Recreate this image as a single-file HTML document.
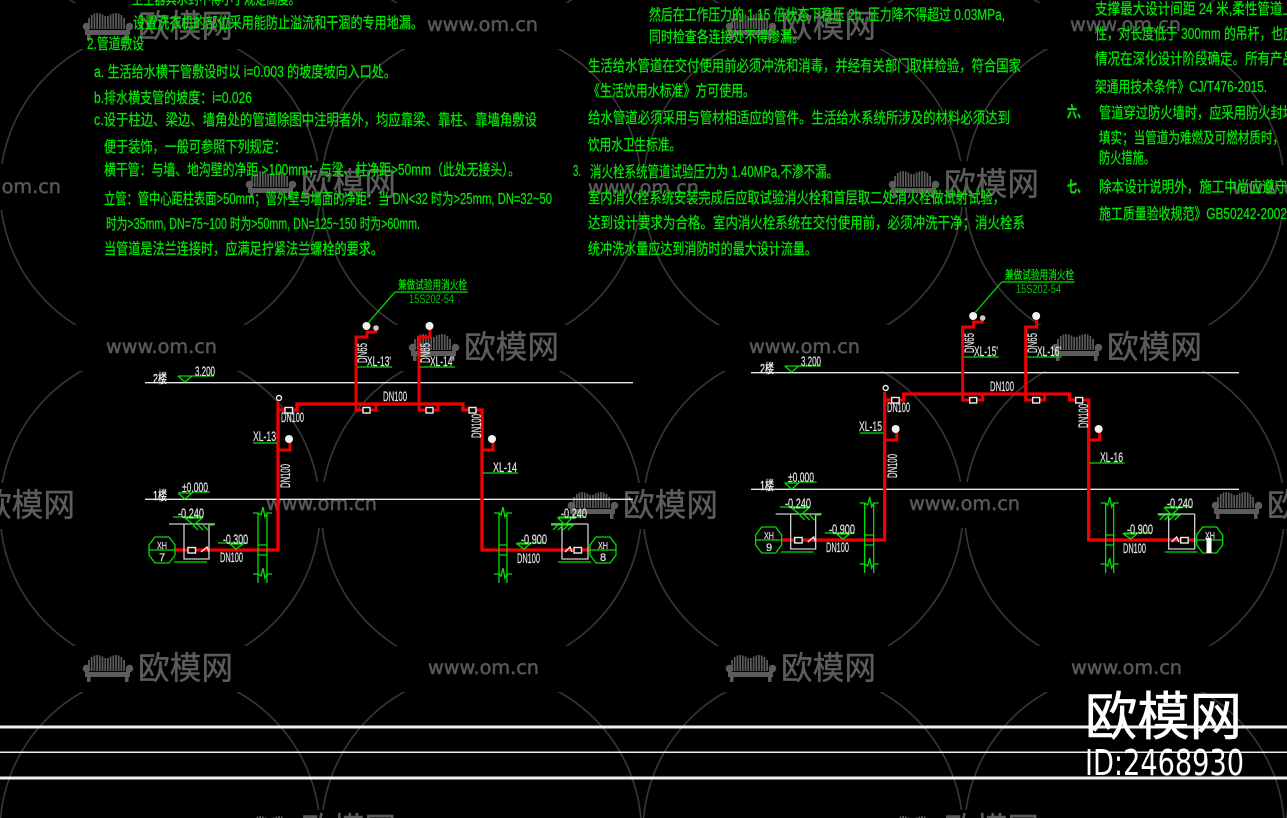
<!DOCTYPE html>
<html lang="zh"><head><meta charset="utf-8"><title>CAD</title>
<style>
html,body{margin:0;padding:0;background:#000;width:1287px;height:818px;overflow:hidden}
svg{display:block}
.t{fill:#00e800;stroke:#00e800;stroke-width:.25;font:15.5px "Liberation Sans","Noto Sans CJK SC",sans-serif}
.w{fill:#e4e4e4;stroke:#e4e4e4;stroke-width:.2;font:14px "Liberation Sans",sans-serif}
.wc{fill:#efefef;stroke:#efefef;stroke-width:.3;font:13px "Liberation Sans","Noto Sans CJK SC",sans-serif}
.gl{fill:#00e800;stroke:#00e800;stroke-width:.2;font:12px "Liberation Sans","Noto Sans CJK SC",sans-serif}
.lg{fill:#5c5c5c;stroke:#5c5c5c;stroke-width:.4;font:32px "Noto Sans CJK SC",sans-serif}
.ww{fill:#585858;stroke:#585858;stroke-width:.5;font:19px "DejaVu Sans",sans-serif}
</style></head><body>
<svg xmlns="http://www.w3.org/2000/svg" width="1287" height="818" viewBox="0 0 1287 818">
<defs>
<pattern id="c" patternUnits="userSpaceOnUse" x="-0.75" y="28.25" width="321.5" height="321.5">
<circle cx="160.75" cy="160.75" r="160" fill="none" stroke="#3c3c3c" stroke-width="1.5"/>
</pattern>
<g id="sofa" fill="#5c5c5c">
<g stroke="#5c5c5c" stroke-width="1.700"><path d="M-68 3V-8M-65.300 3V-11M-62.600 3V-12.500M-59.900 3V-13M-57.200 3V-12.500M-54.500 3V-11.500M-51.800 3V-10M-49.100 3V-10M-46.400 3V-11.500M-43.700 3V-12.500M-41 3V-13M-38.300 3V-12.500M-35.600 3V-11M-32.900 3V-8"/></g>
<circle cx="-70.500" cy="0.500" r="3.800"/><circle cx="-27.500" cy="0.500" r="3.800"/>
<path d="M-72 2H-68V4H-31V2H-27V9H-72Z"/>
<rect x="-70" y="9" width="3.500" height="5"/><rect x="-32" y="9" width="3.500" height="5"/>
</g>
<g id="geo">
<path d="M175 550H278V410H297V404H463V410H482V550H590" fill="none" stroke="#f00000" stroke-width="3.300"/>
<path d="M356 404V337H367V332H377M356 404V410H376V404M419 404V337H430V330M419 404V410H438V404M278 450H290V441M482 450H493V441M278 410V402" fill="none" stroke="#ec0000" stroke-width="3"/>
<circle cx="366.500" cy="326" r="4" fill="#f2f2f2"/><circle cx="376" cy="328" r="2.800" fill="#ccc"/>
<circle cx="429.500" cy="326" r="4" fill="#f2f2f2"/><circle cx="289" cy="439" r="4" fill="#f2f2f2"/>
<circle cx="492" cy="439" r="4" fill="#f2f2f2"/><circle cx="279" cy="398" r="2.500" fill="none" stroke="#eee" stroke-width="1.400"/>
<g fill="#000" stroke="#eee" stroke-width="1.400">
<rect x="285" y="407.500" width="7.500" height="5.500"/><rect x="363" y="407.500" width="7" height="5.500"/>
<rect x="426" y="407.500" width="7" height="5.500"/><rect x="469" y="407.500" width="7" height="5.500"/>
<rect x="188" y="547.500" width="7.500" height="5.500"/><rect x="574" y="547.500" width="7.500" height="5.500"/>
</g>
<path d="M201 552L207 547L209 552M565 552L570 547L572 552" fill="none" stroke="#eee" stroke-width="1.400"/>
<path d="M169 524H215M184 524V559H209V524M551 524H588M562 524V559H588V524" fill="none" stroke="#d0d0d0" stroke-width="1.300"/>
<g fill="none" stroke="#00e000" stroke-width="1.300">
<path d="M178 376H192L185 382L178 376M192 376H214M178 493H192L185 499L178 493M192 492H210"/>
<path d="M173 517H203M185 518H202L194 525ZM193 525L198 530M198 525L203 530M203 525L208 530M208 525H214M218 543H248M230 544H243L236 549Z"/>
<path d="M517 543H545M517 544H530L524 549ZM558 517H586M558 518H572L565 525ZM551 525H574M553 530L558 525M558 530L563 525M563 530L568 525M568 530L573 525"/>
<path d="M174 562H207M558 562H591"/>
<path d="M155 537H169L175 545V555L169 563H155L149 555V545ZM149 550H175"/>
<path d="M590 550H616M596 537H610L616 545V555L610 563H596L590 555V545Z"/>
<path d="M258 513V583M267 513V583M253 513H258L261 515L263 507L265 517L267 513H272M253 574H258L261 576L263 568L265 578L267 574H272M258 545H267M258 555H267"/>
<path d="M499 513V583M507 513V583M494 513H499L501 515L503 507L505 517L507 513H512M494 574H499L501 576L503 568L505 578L507 574H512M499 545H507M499 555H507"/>
<path d="M395 292H468M395 292L368 323"/>
<path d="M253 443H277M483 473H518" />
</g>
<path d="M357 367H392M420 367H455" stroke="#00b800" stroke-width="1.500"/>
</g>
</defs>

<rect width="1287" height="818" fill="#000"/>
<rect width="1287" height="818" fill="url(#c)"/>

<g fill="#000">
<rect x="67" y="3" width="180" height="46"/><rect x="710" y="3" width="180" height="46"/>
<rect x="392" y="3" width="180" height="46"/><rect x="1036" y="3" width="180" height="46"/>
<rect x="-84" y="164" width="180" height="46"/><rect x="230" y="161" width="180" height="46"/>
<rect x="553" y="165" width="180" height="46"/><rect x="873" y="161" width="180" height="46"/>
<rect x="1199" y="165" width="180" height="46"/>
<rect x="71" y="325" width="180" height="46"/><rect x="393" y="325" width="180" height="46"/>
<rect x="715" y="325" width="180" height="46"/><rect x="1036" y="325" width="180" height="46"/>
<rect x="-91" y="483" width="180" height="46"/><rect x="232" y="482" width="180" height="46"/>
<rect x="552" y="483" width="180" height="46"/><rect x="876" y="482" width="180" height="46"/>
<rect x="1196" y="483" width="180" height="46"/>
<rect x="67" y="646" width="180" height="46"/><rect x="393" y="646" width="180" height="46"/>
<rect x="710" y="646" width="180" height="46"/><rect x="1036" y="646" width="180" height="46"/>
<rect x="230" y="810" width="180" height="10"/><rect x="873" y="810" width="180" height="10"/>
</g>

<!-- logos -->
<g>
<use href="#sofa" x="157" y="26"/><text class="lg" x="138" y="37" textLength="95" lengthAdjust="spacingAndGlyphs">欧模网</text>
<use href="#sofa" x="800" y="26"/><text class="lg" x="781" y="37" textLength="95" lengthAdjust="spacingAndGlyphs">欧模网</text>
<use href="#sofa" x="320" y="184"/><text class="lg" x="301" y="195" textLength="95" lengthAdjust="spacingAndGlyphs">欧模网</text>
<use href="#sofa" x="963" y="184"/><text class="lg" x="944" y="195" textLength="95" lengthAdjust="spacingAndGlyphs">欧模网</text>
<use href="#sofa" x="483" y="347"/><text class="lg" x="464" y="358" textLength="95" lengthAdjust="spacingAndGlyphs">欧模网</text>
<use href="#sofa" x="1126" y="347"/><text class="lg" x="1107" y="358" textLength="95" lengthAdjust="spacingAndGlyphs">欧模网</text>
<use href="#sofa" x="-1" y="505"/><text class="lg" x="-20" y="516" textLength="95" lengthAdjust="spacingAndGlyphs">欧模网</text>
<use href="#sofa" x="642" y="505"/><text class="lg" x="623" y="516" textLength="95" lengthAdjust="spacingAndGlyphs">欧模网</text>
<use href="#sofa" x="1286" y="505"/><text class="lg" x="1267" y="516" textLength="95" lengthAdjust="spacingAndGlyphs">欧模网</text>
<use href="#sofa" x="157" y="668"/><text class="lg" x="138" y="679" textLength="95" lengthAdjust="spacingAndGlyphs">欧模网</text>
<use href="#sofa" x="800" y="668"/><text class="lg" x="781" y="679" textLength="95" lengthAdjust="spacingAndGlyphs">欧模网</text>
<use href="#sofa" x="320" y="829"/><text class="lg" x="301" y="840" textLength="95" lengthAdjust="spacingAndGlyphs">欧模网</text>
<use href="#sofa" x="963" y="829"/><text class="lg" x="944" y="840" textLength="95" lengthAdjust="spacingAndGlyphs">欧模网</text>
</g>
<g>
<text class="ww" x="427" y="31" textLength="111" lengthAdjust="spacingAndGlyphs">www.om.cn</text>
<text class="ww" x="1070" y="31" textLength="111" lengthAdjust="spacingAndGlyphs">www.om.cn</text>
<text class="ww" x="-50" y="193" textLength="111" lengthAdjust="spacingAndGlyphs">www.om.cn</text>
<text class="ww" x="588" y="194" textLength="111" lengthAdjust="spacingAndGlyphs">www.om.cn</text>
<text class="ww" x="1232" y="194" textLength="111" lengthAdjust="spacingAndGlyphs">www.om.cn</text>
<text class="ww" x="106" y="353" textLength="111" lengthAdjust="spacingAndGlyphs">www.om.cn</text>
<text class="ww" x="749" y="353" textLength="111" lengthAdjust="spacingAndGlyphs">www.om.cn</text>
<text class="ww" x="266" y="510" textLength="111" lengthAdjust="spacingAndGlyphs">www.om.cn</text>
<text class="ww" x="909" y="510" textLength="111" lengthAdjust="spacingAndGlyphs">www.om.cn</text>
<text class="ww" x="428" y="674" textLength="111" lengthAdjust="spacingAndGlyphs">www.om.cn</text>
<text class="ww" x="1071" y="674" textLength="111" lengthAdjust="spacingAndGlyphs">www.om.cn</text>
</g>

<!-- left notes -->
<text class="t" x="132" y="4" textLength="168" lengthAdjust="spacingAndGlyphs">卫生器具水封不得小于规定高度。</text>
<text class="t" x="133" y="28" textLength="290" lengthAdjust="spacingAndGlyphs">设置洗衣机的部位采用能防止溢流和干涸的专用地漏。</text>
<text class="t" x="87" y="49" textLength="57" lengthAdjust="spacingAndGlyphs">2.管道敷设</text>
<text class="t" x="94" y="77" textLength="302" lengthAdjust="spacingAndGlyphs">a. 生活给水横干管敷设时以 i=0.003 的坡度坡向入口处。</text>
<text class="t" x="94" y="103" textLength="158" lengthAdjust="spacingAndGlyphs">b.排水横支管的坡度：i=0.026</text>
<text class="t" x="94" y="125" textLength="443" lengthAdjust="spacingAndGlyphs">c.设于柱边、梁边、墙角处的管道除图中注明者外，均应靠梁、靠柱、靠墙角敷设</text>
<text class="t" x="104" y="152" textLength="182" lengthAdjust="spacingAndGlyphs">便于装饰，一般可参照下列规定：</text>
<text class="t" x="104" y="175" textLength="416" lengthAdjust="spacingAndGlyphs">横干管：与墙、地沟壁的净距 &gt;100mm；与梁、柱净距&gt;50mm（此处无接头）。</text>
<text class="t" x="104" y="204" textLength="448" lengthAdjust="spacingAndGlyphs">立管：管中心距柱表面&gt;50mm；管外壁与墙面的净距：当 DN&lt;32 时为&gt;25mm, DN=32~50</text>
<text class="t" x="106" y="229" textLength="314" lengthAdjust="spacingAndGlyphs">时为&gt;35mm, DN=75~100 时为&gt;50mm, DN=125~150 时为&gt;60mm.</text>
<text class="t" x="104" y="254" textLength="279" lengthAdjust="spacingAndGlyphs">当管道是法兰连接时，应满足拧紧法兰螺栓的要求。</text>

<!-- middle notes -->
<text class="t" x="649" y="20" textLength="356" lengthAdjust="spacingAndGlyphs">然后在工作压力的 1.15 倍状态下稳压 2h, 压力降不得超过 0.03MPa,</text>
<text class="t" x="649" y="42" textLength="155" lengthAdjust="spacingAndGlyphs">同时检查各连接处不得渗漏。</text>
<text class="t" x="588" y="71" textLength="433" lengthAdjust="spacingAndGlyphs">生活给水管道在交付使用前必须冲洗和消毒，并经有关部门取样检验，符合国家</text>
<text class="t" x="588" y="96" textLength="167" lengthAdjust="spacingAndGlyphs">《生活饮用水标准》方可使用。</text>
<text class="t" x="588" y="123" textLength="422" lengthAdjust="spacingAndGlyphs">给水管道必须采用与管材相适应的管件。生活给水系统所涉及的材料必须达到</text>
<text class="t" x="588" y="150" textLength="93" lengthAdjust="spacingAndGlyphs">饮用水卫生标准。</text>
<text class="t" x="573" y="176" textLength="8" lengthAdjust="spacingAndGlyphs">3.</text>
<text class="t" x="590" y="177" textLength="248" lengthAdjust="spacingAndGlyphs">消火栓系统管道试验压力为 1.40MPa,不渗不漏。</text>
<text class="t" x="588" y="203" textLength="417" lengthAdjust="spacingAndGlyphs">室内消火栓系统安装完成后应取试验消火栓和首层取二处消火栓做试射试验，</text>
<text class="t" x="588" y="228" textLength="437" lengthAdjust="spacingAndGlyphs">达到设计要求为合格。室内消火栓系统在交付使用前，必须冲洗干净；消火栓系</text>
<text class="t" x="588" y="254" textLength="229" lengthAdjust="spacingAndGlyphs">统冲洗水量应达到消防时的最大设计流量。</text>

<!-- right notes -->
<text class="t" x="1095" y="14" textLength="200" lengthAdjust="spacingAndGlyphs">支撑最大设计间距 24 米,柔性管道上</text>
<text class="t" x="1095" y="39" textLength="200" lengthAdjust="spacingAndGlyphs">性，对长度低于 300mm 的吊杆，也应</text>
<text class="t" x="1095" y="64" textLength="200" lengthAdjust="spacingAndGlyphs">情况在深化设计阶段确定。所有产品</text>
<text class="t" x="1095" y="92" textLength="172" lengthAdjust="spacingAndGlyphs">架通用技术条件》CJ/T476-2015.</text>
<text class="t" x="1067" y="117" textLength="20" lengthAdjust="spacingAndGlyphs" style="font-weight:bold">六、</text>
<text class="t" x="1099" y="118" textLength="196" lengthAdjust="spacingAndGlyphs">管道穿过防火墙时，应采用防火封堵</text>
<text class="t" x="1099" y="143" textLength="185" lengthAdjust="spacingAndGlyphs">填实；当管道为难燃及可燃材质时，</text>
<text class="t" x="1099" y="163" textLength="56" lengthAdjust="spacingAndGlyphs">防火措施。</text>
<text class="t" x="1067" y="192" textLength="20" lengthAdjust="spacingAndGlyphs" style="font-weight:bold">七、</text>
<text class="t" x="1099" y="192" textLength="188" lengthAdjust="spacingAndGlyphs">除本设计说明外，施工中尚应遵守</text>
<text class="t" x="1099" y="219" textLength="188" lengthAdjust="spacingAndGlyphs">施工质量验收规范》GB50242-2002</text>

<!-- floor lines -->
<path d="M145 382.700H633M145 499.300H633M751 372.700H1239M751 489.300H1239" stroke="#e6e6e6" stroke-width="1.300"/>

<use href="#geo"/>
<use href="#geo" x="606.670" y="-10"/>

<!-- left labels -->
<text class="gl" x="398" y="289" textLength="69" lengthAdjust="spacingAndGlyphs">兼做试验用消火栓</text>
<text class="gl" x="409" y="303" textLength="45" lengthAdjust="spacingAndGlyphs" style="fill:#00c400;stroke:none">15S202-54</text>
<text class="wc" x="153" y="383" textLength="14" lengthAdjust="spacingAndGlyphs">2楼</text>
<text class="wc" x="153" y="500" textLength="14" lengthAdjust="spacingAndGlyphs">1楼</text>
<text class="w" x="195" y="376" textLength="20" lengthAdjust="spacingAndGlyphs">3.200</text>
<text class="w" x="182" y="492" textLength="26" lengthAdjust="spacingAndGlyphs">±0.000</text>
<text class="w" transform="translate(367 353) rotate(-90)" x="-10" textLength="20" lengthAdjust="spacingAndGlyphs">DN65</text>
<text class="w" transform="translate(430 353) rotate(-90)" x="-10" textLength="20" lengthAdjust="spacingAndGlyphs">DN65</text>
<text class="w" x="367" y="366" textLength="24" lengthAdjust="spacingAndGlyphs">XL-13'</text>
<text class="w" x="430" y="366" textLength="24" lengthAdjust="spacingAndGlyphs">XL-14'</text>
<text class="w" x="383" y="401" textLength="24" lengthAdjust="spacingAndGlyphs">DN100</text>
<text class="w" x="281" y="422" textLength="23" lengthAdjust="spacingAndGlyphs">DN100</text>
<text class="w" x="253" y="441" textLength="23" lengthAdjust="spacingAndGlyphs">XL-13</text>
<text class="w" transform="translate(290 476) rotate(-90)" x="-12" textLength="24" lengthAdjust="spacingAndGlyphs">DN100</text>
<text class="w" transform="translate(481 426) rotate(-90)" x="-12" textLength="24" lengthAdjust="spacingAndGlyphs">DN100</text>
<text class="w" x="493" y="472" textLength="24" lengthAdjust="spacingAndGlyphs">XL-14</text>
<text class="w" x="178" y="518" textLength="26" lengthAdjust="spacingAndGlyphs">-0.240</text>
<text class="w" x="223" y="544" textLength="25" lengthAdjust="spacingAndGlyphs">-0.300</text>
<text class="w" x="220" y="562" textLength="23" lengthAdjust="spacingAndGlyphs">DN100</text>
<text class="w" x="561" y="518" textLength="26" lengthAdjust="spacingAndGlyphs">-0.240</text>
<text class="w" x="521" y="544" textLength="26" lengthAdjust="spacingAndGlyphs">-0.900</text>
<text class="w" x="517" y="563" textLength="23" lengthAdjust="spacingAndGlyphs">DN100</text>
<text class="w" x="157" y="549" textLength="10" lengthAdjust="spacingAndGlyphs" style="font-size:10px">XH</text>
<text class="w" x="159" y="561" style="font-size:11px">7</text>
<text class="w" x="598" y="549" textLength="10" lengthAdjust="spacingAndGlyphs" style="font-size:10px">XH</text>
<text class="w" x="600" y="561" style="font-size:11px">8</text>

<!-- right labels -->
<text class="gl" x="1005" y="279" textLength="69" lengthAdjust="spacingAndGlyphs">兼做试验用消火栓</text>
<text class="gl" x="1016" y="293" textLength="45" lengthAdjust="spacingAndGlyphs" style="fill:#00c400;stroke:none">15S202-54</text>
<text class="wc" x="760" y="373" textLength="14" lengthAdjust="spacingAndGlyphs">2楼</text>
<text class="wc" x="760" y="490" textLength="14" lengthAdjust="spacingAndGlyphs">1楼</text>
<text class="w" x="801" y="366" textLength="20" lengthAdjust="spacingAndGlyphs">3.200</text>
<text class="w" x="788" y="482" textLength="26" lengthAdjust="spacingAndGlyphs">±0.000</text>
<text class="w" transform="translate(974 343) rotate(-90)" x="-10" textLength="20" lengthAdjust="spacingAndGlyphs">DN65</text>
<text class="w" transform="translate(1037 343) rotate(-90)" x="-10" textLength="20" lengthAdjust="spacingAndGlyphs">DN65</text>
<text class="w" x="974" y="356" textLength="24" lengthAdjust="spacingAndGlyphs">XL-15'</text>
<text class="w" x="1037" y="356" textLength="24" lengthAdjust="spacingAndGlyphs">XL-16'</text>
<text class="w" x="990" y="391" textLength="24" lengthAdjust="spacingAndGlyphs">DN100</text>
<text class="w" x="887" y="412" textLength="23" lengthAdjust="spacingAndGlyphs">DN100</text>
<text class="w" x="859" y="431" textLength="23" lengthAdjust="spacingAndGlyphs">XL-15</text>
<text class="w" transform="translate(897 466) rotate(-90)" x="-12" textLength="24" lengthAdjust="spacingAndGlyphs">DN100</text>
<text class="w" transform="translate(1088 416) rotate(-90)" x="-12" textLength="24" lengthAdjust="spacingAndGlyphs">DN100</text>
<text class="w" x="1100" y="462" textLength="23" lengthAdjust="spacingAndGlyphs">XL-16</text>
<text class="w" x="785" y="508" textLength="26" lengthAdjust="spacingAndGlyphs">-0.240</text>
<text class="w" x="829" y="534" textLength="26" lengthAdjust="spacingAndGlyphs">-0.900</text>
<text class="w" x="826" y="552" textLength="23" lengthAdjust="spacingAndGlyphs">DN100</text>
<text class="w" x="1167" y="508" textLength="26" lengthAdjust="spacingAndGlyphs">-0.240</text>
<text class="w" x="1127" y="534" textLength="26" lengthAdjust="spacingAndGlyphs">-0.900</text>
<text class="w" x="1123" y="553" textLength="23" lengthAdjust="spacingAndGlyphs">DN100</text>
<text class="w" x="764" y="539" textLength="10" lengthAdjust="spacingAndGlyphs" style="font-size:10px">XH</text>
<text class="w" x="766" y="551" style="font-size:11px">9</text>
<text class="w" x="1205" y="539" textLength="10" lengthAdjust="spacingAndGlyphs" style="font-size:10px">XH</text>
<rect x="1206.500" y="538" width="5" height="15" fill="#fff"/>

<!-- bottom lines -->
<rect x="0" y="725.500" width="1287" height="3" fill="#f0f0f0"/>
<rect x="0" y="751.500" width="1287" height="1.500" fill="#f0f0f0"/>
<rect x="0" y="776.500" width="1287" height="3" fill="#f0f0f0"/>

<text x="1085" y="735" textLength="157" lengthAdjust="spacingAndGlyphs" style="fill:#fff;stroke:#fff;stroke-width:.6;font:52px 'Noto Sans CJK SC',sans-serif">欧模网</text>
<text x="1085" y="775" textLength="159" lengthAdjust="spacingAndGlyphs" style="fill:#fff;font:36px 'DejaVu Sans',sans-serif">ID:2468930</text>
</svg>
</body></html>
